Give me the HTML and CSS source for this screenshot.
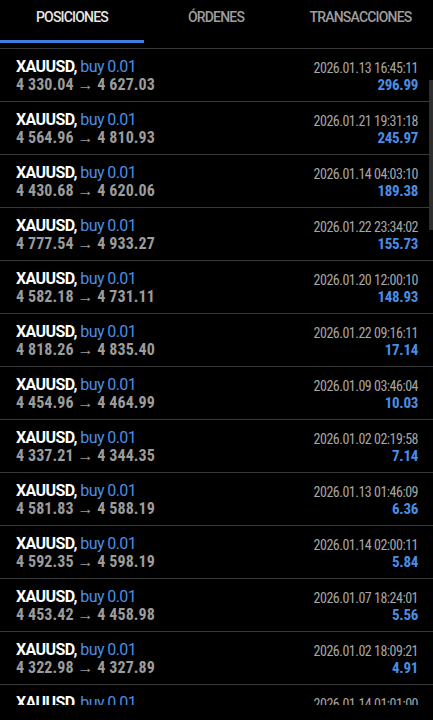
FILE: index.html
```html
<!DOCTYPE html>
<html lang="es">
<head>
<meta charset="utf-8">
<link rel="stylesheet" href="styles.css">
</head>
<body>
<div class="app">
  <nav class="tabs">
    <div class="tab active">POSICIONES</div>
    <div class="tab">ÓRDENES</div>
    <div class="tab">TRANSACCIONES</div>
  </nav>
  <div class="list">
    <div class="row"><div class="l"><div class="t1"><b>XAUUSD,</b> <span class="blue">buy 0.01</span></div><div class="t2">4 330.04 → 4 627.03</div></div><div class="r"><div class="date">2026.01.13 16:45:11</div><div class="pnl">296.99</div></div></div>
    <div class="row"><div class="l"><div class="t1"><b>XAUUSD,</b> <span class="blue">buy 0.01</span></div><div class="t2">4 564.96 → 4 810.93</div></div><div class="r"><div class="date">2026.01.21 19:31:18</div><div class="pnl">245.97</div></div></div>
    <div class="row"><div class="l"><div class="t1"><b>XAUUSD,</b> <span class="blue">buy 0.01</span></div><div class="t2">4 430.68 → 4 620.06</div></div><div class="r"><div class="date">2026.01.14 04:03:10</div><div class="pnl">189.38</div></div></div>
    <div class="row"><div class="l"><div class="t1"><b>XAUUSD,</b> <span class="blue">buy 0.01</span></div><div class="t2">4 777.54 → 4 933.27</div></div><div class="r"><div class="date">2026.01.22 23:34:02</div><div class="pnl">155.73</div></div></div>
    <div class="row"><div class="l"><div class="t1"><b>XAUUSD,</b> <span class="blue">buy 0.01</span></div><div class="t2">4 582.18 → 4 731.11</div></div><div class="r"><div class="date">2026.01.20 12:00:10</div><div class="pnl">148.93</div></div></div>
    <div class="row"><div class="l"><div class="t1"><b>XAUUSD,</b> <span class="blue">buy 0.01</span></div><div class="t2">4 818.26 → 4 835.40</div></div><div class="r"><div class="date">2026.01.22 09:16:11</div><div class="pnl">17.14</div></div></div>
    <div class="row"><div class="l"><div class="t1"><b>XAUUSD,</b> <span class="blue">buy 0.01</span></div><div class="t2">4 454.96 → 4 464.99</div></div><div class="r"><div class="date">2026.01.09 03:46:04</div><div class="pnl">10.03</div></div></div>
    <div class="row"><div class="l"><div class="t1"><b>XAUUSD,</b> <span class="blue">buy 0.01</span></div><div class="t2">4 337.21 → 4 344.35</div></div><div class="r"><div class="date">2026.01.02 02:19:58</div><div class="pnl">7.14</div></div></div>
    <div class="row"><div class="l"><div class="t1"><b>XAUUSD,</b> <span class="blue">buy 0.01</span></div><div class="t2">4 581.83 → 4 588.19</div></div><div class="r"><div class="date">2026.01.13 01:46:09</div><div class="pnl">6.36</div></div></div>
    <div class="row"><div class="l"><div class="t1"><b>XAUUSD,</b> <span class="blue">buy 0.01</span></div><div class="t2">4 592.35 → 4 598.19</div></div><div class="r"><div class="date">2026.01.14 02:00:11</div><div class="pnl">5.84</div></div></div>
    <div class="row"><div class="l"><div class="t1"><b>XAUUSD,</b> <span class="blue">buy 0.01</span></div><div class="t2">4 453.42 → 4 458.98</div></div><div class="r"><div class="date">2026.01.07 18:24:01</div><div class="pnl">5.56</div></div></div>
    <div class="row"><div class="l"><div class="t1"><b>XAUUSD,</b> <span class="blue">buy 0.01</span></div><div class="t2">4 322.98 → 4 327.89</div></div><div class="r"><div class="date">2026.01.02 18:09:21</div><div class="pnl">4.91</div></div></div>
    <div class="row"><div class="l"><div class="t1"><b>XAUUSD,</b> <span class="blue">buy 0.01</span></div><div class="t2">4 612.40 → 4 616.83</div></div><div class="r"><div class="date">2026.01.14 01:01:00</div><div class="pnl">4.43</div></div></div>
    <div class="scrollbar"></div>
  </div>
</div>
</body>
</html>
```
FILE: styles.css
```css
* { box-sizing: border-box; }
html, body { margin: 0; padding: 0; background: #000; }
body { font-family: Roboto, "Liberation Sans", sans-serif; color: #fff; }
.app { width: 433px; height: 720px; overflow: hidden; background: #000; }
.tabs {
  display: grid;
  grid-template-columns: 144px 144px 145px;
  height: 49px;
  border-bottom: 1px solid #3a3a3a;
}
.tab {
  font-size: 14px;
  font-weight: 500;
  letter-spacing: -0.8px;
  color: #9e9e9e;
  text-align: center;
  padding-top: 9px;
  height: 43px;
}
.tab.active { color: #e6e6e6; border-bottom: 3px solid #3d7fe0; }
.list { position: relative; height: 656px; overflow: hidden; }
.row {
  display: flex;
  justify-content: space-between;
  height: 53px;
  border-bottom: 1px solid #3a3a3a;
  padding: 8px 15px 0 16px;
}
.t1 { font-size: 16px; line-height: 20px; letter-spacing: -0.6px; }
.t1 b { font-weight: 700; color: #fff; }
.blue { color: #4a8ee6; }
.t2 { font-size: 16px; line-height: 16px; font-weight: 700; color: #9c9c9c; letter-spacing: 0.1px; font-stretch: 75%; }
.r { text-align: right; }
.date { font-size: 14px; line-height: 22px; color: #a6a6a6; letter-spacing: -0.5px; font-stretch: 75%; }
.pnl { font-size: 15px; line-height: 13px; font-weight: 700; color: #4a8ee6; letter-spacing: -0.3px; font-stretch: 75%; }
.scrollbar { position: absolute; right: 0; top: 31px; width: 4px; height: 150px; background: #2e2e2e; }
```
